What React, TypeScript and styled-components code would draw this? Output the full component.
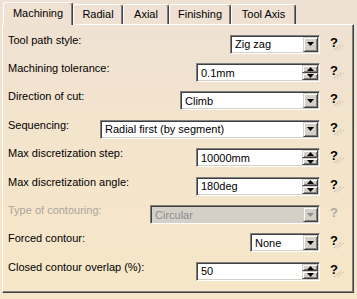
import React from 'react';
import styled, { createGlobalStyle } from 'styled-components';

const Global = createGlobalStyle`
  html, body { margin: 0; padding: 0; }
  body {
    background: #f2e4cf;
    font-family: "Liberation Sans", Arial, sans-serif;
    font-size: 11px;
    color: #000;
  }
`;

const Window = styled.div`
  width: 357px;
  height: 299px;
  overflow: hidden;
  background: linear-gradient(180deg, #eee1d4 0%, #f3e4cc 45%, #f7e7c8 100%);
  display: flex;
  flex-direction: column;
`;

const TabBar = styled.div`
  display: flex;
  align-items: flex-end;
  height: 24px;
  padding-left: 3px;
  position: relative;
  z-index: 1;
`;

const Tab = styled.div<{ $active?: boolean; $w: number }>`
  box-sizing: border-box;
  width: ${(p) => p.$w}px;
  height: ${(p) => (p.$active ? 23 : 20)}px;
  margin-bottom: ${(p) => (p.$active ? -1 : 0)}px;
  border-top: 1px solid #fff;
  border-left: 1px solid #fff;
  border-right: 1px solid #404040;
  box-shadow: inset -1px 0 0 #808080;
  border-radius: 3px 3px 0 0;
  background: ${(p) => (p.$active ? '#efe2d2' : 'transparent')};
  display: flex;
  justify-content: center;
  align-items: center;
  padding-bottom: ${(p) => (p.$active ? 3 : 1)}px;
  font-size: 11px;
  white-space: nowrap;
`;

const Panel = styled.div`
  margin-left: 2px;
  width: 352px;
  height: 269px;
  box-sizing: border-box;
  border-top: 1px solid #fff;
  border-left: 1px solid #fff;
  border-right: 1px solid #404040;
  border-bottom: 1px solid #404040;
  box-shadow: inset -1px -1px 0 #808080;
  padding: 5px 0 0 5px;
  display: grid;
  grid-template-columns: minmax(0, 1fr) auto 33px;
  grid-auto-rows: 28.4px;
  align-items: center;
`;

const Label = styled.div<{ $disabled?: boolean }>`
  white-space: nowrap;
  line-height: 13px;
  margin-bottom: 8px;
  color: ${(p) => (p.$disabled ? '#aaa49b' : '#000')};
`;

const Field = styled.div<{ $w: number; $disabled?: boolean }>`
  justify-self: end;
  width: ${(p) => p.$w}px;
  height: 19px;
  box-sizing: border-box;
  border-top: 1px solid #808080;
  border-left: 1px solid #808080;
  border-right: 1px solid #fff;
  border-bottom: 1px solid #fff;
  box-shadow: inset 1px 1px 0 #404040, inset -1px -1px 0 #d4d0c8;
  background: ${(p) => (p.$disabled ? '#d4d0c8' : '#fff')};
  padding: 1px 1px 1px 2px;
  display: flex;
  align-items: stretch;
`;

const Value = styled.div<{ $disabled?: boolean }>`
  flex: 1;
  display: flex;
  align-items: center;
  padding-left: 2px;
  color: ${(p) => (p.$disabled ? '#8c8c8c' : '#000')};
  white-space: nowrap;
  overflow: hidden;
`;

const DropButton = styled.div`
  width: 15px;
  box-sizing: border-box;
  background: #d4d0c8;
  border-top: 1px solid #d4d0c8;
  border-left: 1px solid #d4d0c8;
  border-right: 1px solid #404040;
  border-bottom: 1px solid #404040;
  box-shadow: inset 1px 1px 0 #fff, inset -1px -1px 0 #808080;
  display: flex;
  align-items: center;
  justify-content: center;
`;

const Spinner = styled.div`
  width: 16px;
  display: flex;
  flex-direction: column;
`;

const SpinHalf = styled.div`
  flex: 1;
  box-sizing: border-box;
  background: #d4d0c8;
  border-top: 1px solid #d4d0c8;
  border-left: 1px solid #d4d0c8;
  border-right: 1px solid #404040;
  border-bottom: 1px solid #404040;
  box-shadow: inset 1px 1px 0 #fff, inset -1px -1px 0 #808080;
  display: flex;
  align-items: center;
  justify-content: center;
`;

const HelpWrap = styled.div<{ $disabled?: boolean }>`
  justify-self: start;
  margin-left: 10px;
  margin-top: -4px;
  display: inline-flex;
  align-items: flex-end;
  color: ${(p) => (p.$disabled ? '#a8a8a8' : '#000')};
  font-weight: bold;
  font-size: 13px;
  line-height: 13px;
`;

const Slashes = styled.svg`
  margin-left: -4px;
  margin-bottom: -2px;
`;

const Arrow = ({ dir, color = '#000' }: { dir: 'up' | 'down'; color?: string }) => (
  <svg width="7" height="4" viewBox="0 0 7 4">
    {dir === 'down' ? (
      <polygon points="0,0 7,0 3.5,4" fill={color} />
    ) : (
      <polygon points="0,4 7,4 3.5,0" fill={color} />
    )}
  </svg>
);

const Help = ({ disabled }: { disabled?: boolean }) => (
  <HelpWrap $disabled={disabled}>
    <span>?</span>
    {!disabled && (
      <Slashes width="10" height="7" viewBox="0 0 10 7">
        <line x1="0" y1="6" x2="7" y2="0.5" stroke="#a0a0a0" strokeWidth="1" strokeDasharray="1 1" />
        <line x1="3" y1="6.5" x2="10" y2="1" stroke="#b8b8b8" strokeWidth="1" strokeDasharray="1 1" />
      </Slashes>
    )}
  </HelpWrap>
);

const Combo = ({ w, value, disabled }: { w: number; value: string; disabled?: boolean }) => (
  <Field $w={w} $disabled={disabled}>
    <Value $disabled={disabled}>{value}</Value>
    <DropButton>
      <Arrow dir="down" color={disabled ? '#909090' : '#000'} />
    </DropButton>
  </Field>
);

const Spin = ({ w, value }: { w: number; value: string }) => (
  <Field $w={w}>
    <Value>{value}</Value>
    <Spinner>
      <SpinHalf>
        <Arrow dir="up" />
      </SpinHalf>
      <SpinHalf>
        <Arrow dir="down" />
      </SpinHalf>
    </Spinner>
  </Field>
);

type RowDef = {
  label: string;
  kind: 'combo' | 'spin';
  w: number;
  value: string;
  disabled?: boolean;
};

const rows: RowDef[] = [
  { label: 'Tool path style:', kind: 'combo', w: 90, value: 'Zig zag' },
  { label: 'Machining tolerance:', kind: 'spin', w: 124, value: '0.1mm' },
  { label: 'Direction of cut:', kind: 'combo', w: 140, value: 'Climb' },
  { label: 'Sequencing:', kind: 'combo', w: 220, value: 'Radial first (by segment)' },
  { label: 'Max discretization step:', kind: 'spin', w: 124, value: '10000mm' },
  { label: 'Max discretization angle:', kind: 'spin', w: 124, value: '180deg' },
  { label: 'Type of contouring:', kind: 'combo', w: 170, value: 'Circular', disabled: true },
  { label: 'Forced contour:', kind: 'combo', w: 70, value: 'None' },
  { label: 'Closed contour overlap (%):', kind: 'spin', w: 124, value: '50' },
];

const tabs = [
  { name: 'Machining', w: 70, active: true },
  { name: 'Radial', w: 50 },
  { name: 'Axial', w: 46 },
  { name: 'Finishing', w: 62 },
  { name: 'Tool Axis', w: 65 },
];

export default function App() {
  return (
    <>
      <Global />
      <Window>
        <TabBar>
          {tabs.map((t) => (
            <Tab key={t.name} $w={t.w} $active={t.active}>
              {t.name}
            </Tab>
          ))}
        </TabBar>
        <Panel>
          {rows.map((r) => (
            <React.Fragment key={r.label}>
              <Label $disabled={r.disabled}>{r.label}</Label>
              {r.kind === 'combo' ? (
                <Combo w={r.w} value={r.value} disabled={r.disabled} />
              ) : (
                <Spin w={r.w} value={r.value} />
              )}
              <Help disabled={r.disabled} />
            </React.Fragment>
          ))}
        </Panel>
      </Window>
    </>
  );
}
